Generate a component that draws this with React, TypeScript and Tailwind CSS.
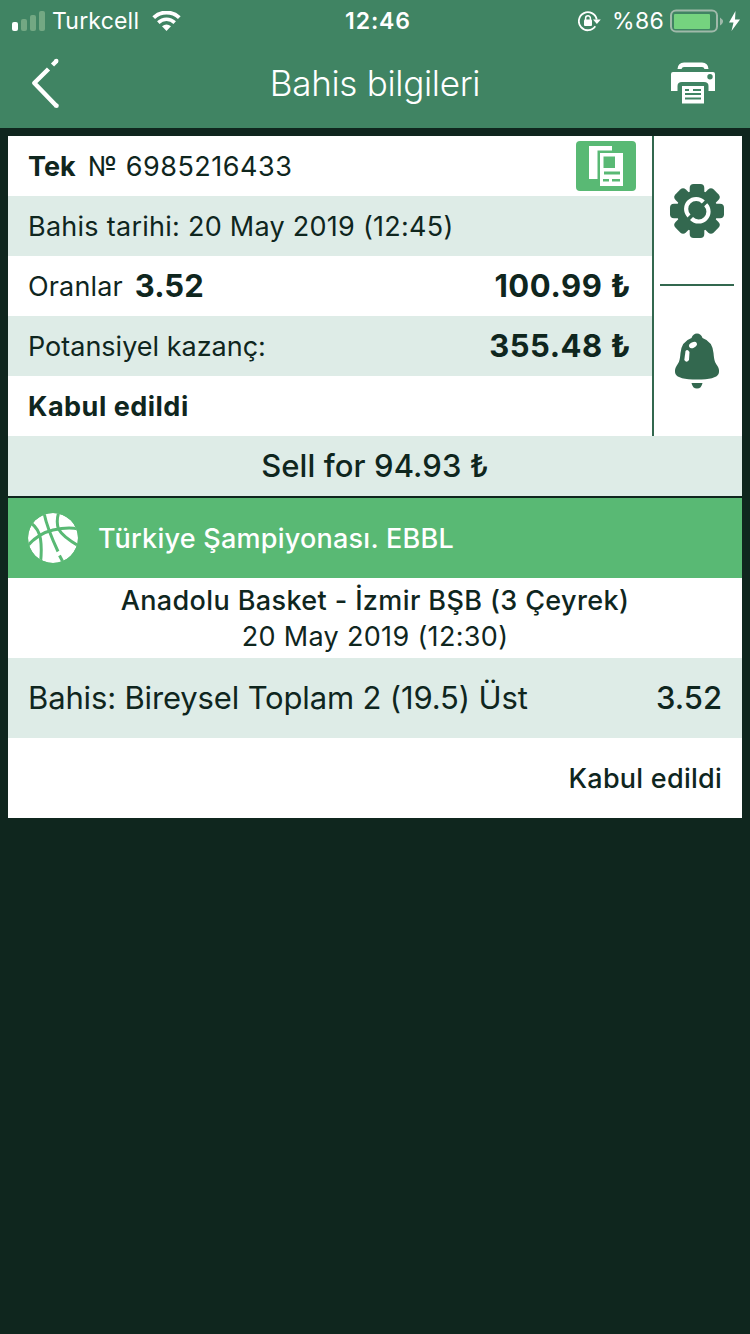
import type { ReactNode } from "react";

function StatusBar() {
  return (
    <div className="grid h-10 grid-cols-3 items-center text-[23px] leading-10 text-white">
      <div className="flex items-center pl-3">
        <svg width="34" height="20" viewBox="0 0 34 20">
          <rect x="0" y="11" width="6" height="9" rx="2" fill="#fff" />
          <rect x="9" y="8" width="6" height="12" rx="2" fill="#73a883" />
          <rect x="18" y="4" width="6" height="16" rx="2" fill="#73a883" />
          <rect x="27" y="0" width="6" height="20" rx="2" fill="#73a883" />
        </svg>
        <span className="ml-[6px] pt-px tracking-[0.200px]">Turkcell</span>
        <svg className="ml-[13px]" width="29" height="20" viewBox="0 0 29 20" fill="none" stroke="#fff">
          <path d="M1.7 6.6C9-.1 20-.1 27.300 6.600" strokeWidth="4" />
          <path d="M6.300 11.600C11 7.200 18 7.200 22.700 11.600" strokeWidth="3.600" />
          <path d="M10 15.200Q14.500 11.800 19 15.200L14.500 20Z" fill="#fff" stroke="none" />
        </svg>
      </div>
      <div className="pt-px pl-[6px] text-center font-semibold tracking-[0.9px]">12:46</div>
      <div className="flex items-center justify-end pr-[9px]">
        <svg width="24" height="22" viewBox="0 0 24 22" fill="none">
          <path d="M17.300 16.300A9 9 0 1 1 18.700 9.500" stroke="#fff" strokeWidth="1.800" />
          <path d="M15 9.500H22.800L18.900 14Z" fill="#fff" />
          <rect x="6" y="9.500" width="8" height="6.500" rx="1" fill="#fff" />
          <path d="M7.600 10V8.200a2.400 2.400 0 0 1 4.800 0V10" stroke="#fff" strokeWidth="1.500" />
        </svg>
        <span className="ml-[10px] pt-px tracking-[0.300px]">%86</span>
        <svg className="ml-[6px]" width="71" height="24" viewBox="0 0 71 24">
          <rect x="1" y="1.500" width="46" height="21" rx="5" fill="none" stroke="#a0b9aa" strokeWidth="2" />
          <rect x="4" y="5" width="36" height="15" rx="1" fill="#75d37f" />
          <path d="M50 8.500Q56 12.500 50 16.500Z" fill="#a0b9aa" />
          <path d="M65.500 2L59 13.500H63.500L61.500 22L70 10.500H65Z" fill="#fff" />
        </svg>
      </div>
    </div>
  );
}

function Header() {
  return (
    <header className="h-32 bg-[#408463]">
      <StatusBar />
      <div className="flex h-[88px] items-center justify-between pl-[30px] pr-[35px] text-white">
        <svg className="-mt-[4px]" width="32" height="52" viewBox="0 0 32 52" fill="none" stroke="#fff" strokeWidth="4.500">
          <path d="M18.500 13L4.300 27L26.500 50" strokeLinejoin="round" />
          <path d="M22.500 9L26.500 5" />
          <circle cx="26.300" cy="5" r="2.200" fill="#fff" stroke="none" />
          <circle cx="26.500" cy="49.700" r="2.300" fill="#fff" stroke="none" />
        </svg>
        <h1 className="-mt-[2px] ml-[17px] text-[35px] font-light tracking-[-0.300px]">Bahis bilgileri</h1>
        <svg className="-mt-[2px]" width="44" height="42" viewBox="0 0 44 42">
          <path d="M6.500 7Q7 .5 13 .5H31Q37 .5 37.500 7H33.500Q33 5 31 5H13Q11 5 10.500 7Z" fill="#fff" />
          <path fillRule="evenodd" d="M2 10H42Q44 10 44 12V29H37.500V24Q37.500 20 33 20H11Q6.500 20 6.500 24V29H0V12Q0 10 2 10ZM39 12a2.700 2.700 0 1 0 0 5.400a2.700 2.700 0 0 0 0-5.400Z" fill="#fff" />
          <path fillRule="evenodd" d="M11 24H33V41.500H11ZM14 27V29H18V27ZM22 27V29H30V27ZM14 31V33H30V31ZM14 35.500V37.500H30V35.500Z" fill="#fff" />
        </svg>
      </div>
    </header>
  );
}

function Row({ tinted, children }: { tinted?: boolean; children: ReactNode }) {
  return (
    <div className={`flex h-[60px] items-center pl-5 pr-[22px] ${tinted ? "bg-[#deece7]" : "bg-white"}`}>
      {children}
    </div>
  );
}

function CopyButton() {
  return (
    <svg className="-mr-[6px] ml-auto" width="60" height="50" viewBox="0 0 60 50">
      <rect width="60" height="50" rx="4" fill="#59b974" />
      <path d="M13 5H36V9.500H21.500V38H13Z" fill="#fff" />
      <path fillRule="evenodd" d="M24 12H47V45H24ZM27.500 15.500V27H39V15.500ZM28 30.500V33.500H44V30.500ZM27 38V40.500H33V38ZM36 38V40.500H44V38Z" fill="#fff" />
    </svg>
  );
}

function GearIcon() {
  return (
    <svg width="56" height="56" viewBox="-28 -28 56 56">
      <g fill="#33684f">
        <circle r="20.500" />
        {[0, 45, 90, 135].map((angle) => (
          <rect key={angle} x="-7.300" y="-27" width="14.600" height="54" rx="4" transform={`rotate(${angle})`} />
        ))}
      </g>
      <g fill="none" stroke="#fff" strokeWidth="4.200">
        <path d="M-8 5A9.900 9.900 0 0 1 6.300-9" />
        <path d="M8.700-6.300A9.900 9.900 0 0 1-5.500 7.500" />
      </g>
    </svg>
  );
}

function BellIcon() {
  return (
    <svg width="44" height="56" viewBox="0 0 44 56">
      <path d="M22 .5Q26 .5 27.500 5Q37.500 8.500 38.500 20C39.200 28 40 29.500 42.500 33Q45 37 43.500 41Q41 46.500 22 46.500T.5 41Q-1 37 1.500 33C4 29.500 4.800 28 5.500 20Q6.500 8.500 16.500 5Q18 .5 22 .5Z" fill="#33684f" />
      <ellipse cx="18" cy="12" rx="4.200" ry="2.700" fill="#fff" transform="rotate(-28 18 12)" />
      <path d="M10.500 18Q12.500 15.500 14.500 19L14 27Q11.500 30.500 9.300 27Z" fill="#fff" />
      <path d="M16.500 50H27.500Q26.500 55.500 22 55.500T16.500 50Z" fill="#33684f" />
    </svg>
  );
}

function Basketball() {
  return (
    <svg width="50" height="50" viewBox="0 0 50 50">
      <defs>
        <clipPath id="ball">
          <circle cx="25" cy="25" r="25" />
        </clipPath>
      </defs>
      <g clipPath="url(#ball)">
        <circle cx="25" cy="25" r="25" fill="#fff" />
        <g fill="none" stroke="#59b974" strokeWidth="3">
          <path d="M-1 33.500Q10 20.500 25 17T51 16" />
          <path d="M16 0Q19 15 30 38.500M31.500 42.500L36 51" />
          <path d="M30.500 0Q28 9 30.500 16Q35 24 51 33" />
          <path d="M3 10Q11 16 12.500 26T12.500 50" />
        </g>
      </g>
    </svg>
  );
}

export default function App() {
  return (
    <div className="min-h-[1334px] w-[750px] bg-[#0f261e] font-['Inter','Liberation_Sans',sans-serif] whitespace-nowrap text-[#0f261e]">
      <Header />
      <main className="mx-2 mt-2">
        <section className="flex bg-white">
          <div className="w-[644px] text-[27px]">
            <Row>
              <b className="pt-[2px] font-bold">Tek</b>
              <span className="ml-[12px] pt-[2px] tracking-[0.500px]">№ 6985216433</span>
              <CopyButton />
            </Row>
            <Row tinted>
              <span className="pt-[2px] tracking-[0.260px]">Bahis tarihi: 20 May 2019 (12:45)</span>
            </Row>
            <Row>
              <span className="pt-[2px] tracking-[0.150px]">Oranlar</span>
              <b className="ml-[12px] text-[31px] font-bold">3.52</b>
              <b className="-mr-px ml-auto text-[31px] font-bold tracking-[0.600px]">100.99 ₺</b>
            </Row>
            <Row tinted>
              <span className="pt-[2px]">Potansiyel kazanç:</span>
              <b className="-mr-px ml-auto text-[31px] font-bold tracking-[0.500px]">355.48 ₺</b>
            </Row>
            <Row>
              <b className="pt-[2px] font-bold tracking-[0.500px]">Kabul edildi</b>
            </Row>
          </div>
          <aside className="flex w-[90px] flex-col items-center border-l-2 border-[#33684f]">
            <div className="flex h-[148px] w-full items-center justify-center pt-[2px] pr-[3px]">
              <GearIcon />
            </div>
            <div className="h-[2px] w-[74px] -translate-x-px bg-[#33684f]" />
            <div className="flex h-[150px] w-full items-center justify-center pr-[3px]">
              <BellIcon />
            </div>
          </aside>
        </section>
        <div className="flex h-[60px] items-center justify-center bg-[#deece7] text-[31px] font-medium tracking-[0.100px]">
          <span>Sell for 94.93 ₺</span>
        </div>
        <div className="mt-[2px] flex h-20 items-center bg-[#59b974] pl-5 text-[27px] font-medium text-white">
          <Basketball />
          <span className="ml-[20px] pt-[2px] tracking-[0.240px]">Türkiye Şampiyonası. EBBL</span>
        </div>
        <div className="flex h-20 flex-col items-center justify-center bg-white pt-[2px] text-[27px] leading-[36px]">
          <span className="font-medium tracking-[0.380px]">Anadolu Basket - İzmir BŞB (3 Çeyrek)</span>
          <span className="tracking-[0.330px]">20 May 2019 (12:30)</span>
        </div>
        <div className="flex h-20 items-center justify-between bg-[#deece7] px-5 text-[31px]">
          <span className="tracking-[-0.150px]">Bahis: Bireysel Toplam 2 (19.5) Üst</span>
          <span className="font-medium">3.52</span>
        </div>
        <div className="flex h-20 items-center justify-end bg-white px-5 pt-[2px] text-[27px] font-medium tracking-[0.250px]">
          <span>Kabul edildi</span>
        </div>
      </main>
    </div>
  );
}
